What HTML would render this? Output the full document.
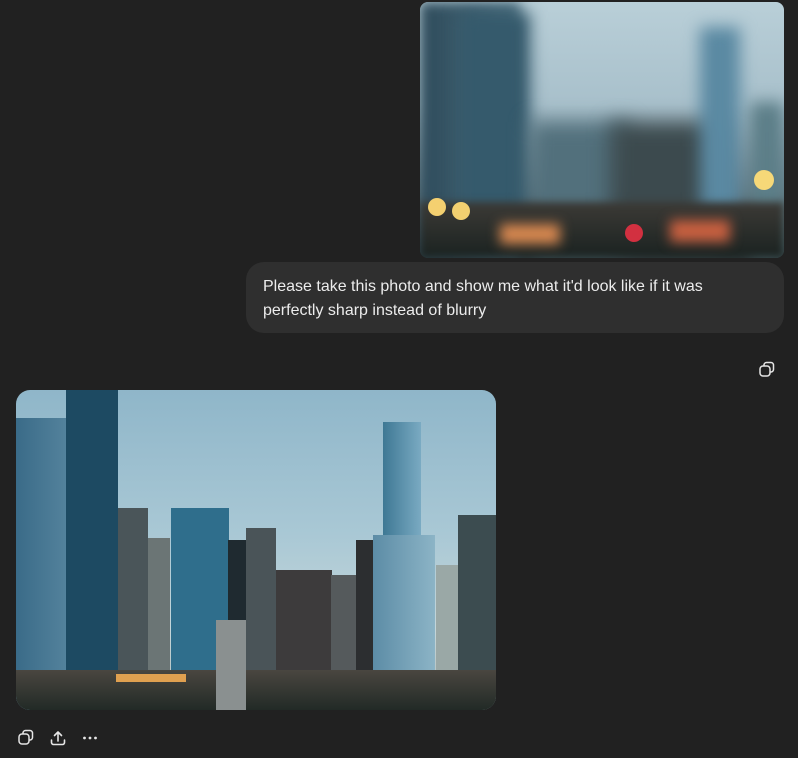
<!DOCTYPE html>
<html><head><style>
html,body{margin:0;padding:0;background:#212121;width:798px;height:758px;overflow:hidden;font-family:"Liberation Sans",sans-serif;}
.a{position:absolute}
</style></head><body>
<div class="a" style="left:420px;top:2px;width:364px;height:256px;border-radius:8px;overflow:hidden;background:linear-gradient(180deg,#b9cfd8 0%,#a8c0cb 40%,#6e8590 70%,#2f3a3c 100%);">
  <div class="a" style="left:0;top:0;width:100px;height:256px;background:linear-gradient(90deg,#2d4a5a,#4e7080);filter:blur(6px)"></div>
  <div class="a" style="left:40px;top:10px;width:70px;height:230px;background:#355a6c;filter:blur(8px)"></div>
  <div class="a" style="left:110px;top:120px;width:100px;height:136px;background:#52707c;filter:blur(10px)"></div>
  <div class="a" style="left:190px;top:120px;width:110px;height:136px;background:#3c4a4e;filter:blur(10px)"></div>
  <div class="a" style="left:280px;top:25px;width:40px;height:200px;background:#5a89a2;filter:blur(8px)"></div>
  <div class="a" style="left:330px;top:100px;width:34px;height:156px;background:#5c7e88;filter:blur(8px)"></div>
  <div class="a" style="left:0;top:200px;width:364px;height:56px;background:linear-gradient(180deg,#3c3a36,#1a2220);filter:blur(4px)"></div>
  <div class="a" style="left:80px;top:222px;width:60px;height:20px;background:#d88850;filter:blur(6px)"></div>
  <div class="a" style="left:8px;top:196px;width:18px;height:18px;border-radius:50%;background:#f4d070"></div>
  <div class="a" style="left:32px;top:200px;width:18px;height:18px;border-radius:50%;background:#f2d070"></div>
  <div class="a" style="left:334px;top:168px;width:20px;height:20px;border-radius:50%;background:#f6d878"></div>
  <div class="a" style="left:205px;top:222px;width:18px;height:18px;border-radius:50%;background:#d23040"></div>
  <div class="a" style="left:250px;top:218px;width:60px;height:22px;background:#c86040;filter:blur(6px)"></div>
</div>
<div class="a" style="left:246px;top:262px;width:538px;height:71px;border-radius:18px;background:#2f2f2f;"></div>
<div class="a" style="left:263px;top:275px;width:470px;color:#ececec;font-size:16px;line-height:24px;">Please take this photo and show me what it'd look like if it was perfectly sharp instead of blurry</div>
<svg class="a" style="left:758px;top:361px" width="18" height="18" viewBox="0 0 18 18" fill="none" stroke="#e6e6e6" stroke-width="1.5"><rect x="2" y="5" width="10" height="10" rx="3"/><path d="M6 4.5V4a2.5 2.5 0 0 1 2.5-2.5H13A2.5 2.5 0 0 1 15.5 4v4.5A2.5 2.5 0 0 1 13 11h-.5"/></svg>
<div class="a" style="left:16px;top:390px;width:480px;height:320px;border-radius:14px;overflow:hidden;background:linear-gradient(180deg,#8fb6c9 0%,#a9c8d5 45%,#c4d6da 75%,#b0b8b4 100%);">
  <div class="a" style="left:0;top:28px;width:68px;height:292px;background:linear-gradient(90deg,#3a6b88,#5c8aa3);"></div>
  <div class="a" style="left:50px;top:0;width:52px;height:320px;background:#1d4a62;"></div>
  <div class="a" style="left:102px;top:118px;width:30px;height:202px;background:#4a5559;"></div>
  <div class="a" style="left:132px;top:148px;width:22px;height:172px;background:#6b7575;"></div>
  <div class="a" style="left:155px;top:118px;width:58px;height:202px;background:#2f6e8c;"></div>
  <div class="a" style="left:212px;top:150px;width:28px;height:170px;background:#1f2a30;"></div>
  <div class="a" style="left:230px;top:138px;width:30px;height:182px;background:#4a5458;"></div>
  <div class="a" style="left:260px;top:180px;width:56px;height:140px;background:#3d3b3c;"></div>
  <div class="a" style="left:315px;top:185px;width:30px;height:135px;background:#555a5c;"></div>
  <div class="a" style="left:340px;top:150px;width:28px;height:170px;background:#2c2e30;"></div>
  <div class="a" style="left:367px;top:32px;width:38px;height:288px;background:linear-gradient(90deg,#3e7894,#7aaac2);"></div>
  <div class="a" style="left:357px;top:145px;width:62px;height:175px;background:linear-gradient(90deg,#5c8ca6,#8cb4c6);"></div>
  <div class="a" style="left:420px;top:175px;width:24px;height:145px;background:#9aa8a6;"></div>
  <div class="a" style="left:442px;top:125px;width:38px;height:195px;background:#3c4c50;"></div>
  <div class="a" style="left:0;top:280px;width:480px;height:40px;background:linear-gradient(180deg,#4a4640,#222a26);"></div>
  <div class="a" style="left:100px;top:284px;width:70px;height:8px;background:#e0a050;"></div>
  <div class="a" style="left:200px;top:230px;width:30px;height:90px;background:#8a9090;"></div>
</div>
<svg class="a" style="left:17px;top:729px" width="18" height="18" viewBox="0 0 18 18" fill="none" stroke="#e6e6e6" stroke-width="1.5"><rect x="2" y="5" width="10" height="10" rx="3"/><path d="M6 4.5V4a2.5 2.5 0 0 1 2.5-2.5H13A2.5 2.5 0 0 1 15.5 4v4.5A2.5 2.5 0 0 1 13 11h-.5"/></svg>
<svg class="a" style="left:49px;top:729px" width="18" height="18" viewBox="0 0 18 18" fill="none" stroke="#e6e6e6" stroke-width="1.6" stroke-linecap="round" stroke-linejoin="round"><path d="M9 12V3M5.5 6.5 9 3l3.5 3.5M2.5 11v2.5a2 2 0 0 0 2 2h9a2 2 0 0 0 2-2V11"/></svg>
<svg class="a" style="left:81px;top:729px" width="18" height="18" viewBox="0 0 18 18" fill="#e6e6e6"><circle cx="3.5" cy="9" r="1.4"/><circle cx="9" cy="9" r="1.4"/><circle cx="14.5" cy="9" r="1.4"/></svg>
</body></html>
